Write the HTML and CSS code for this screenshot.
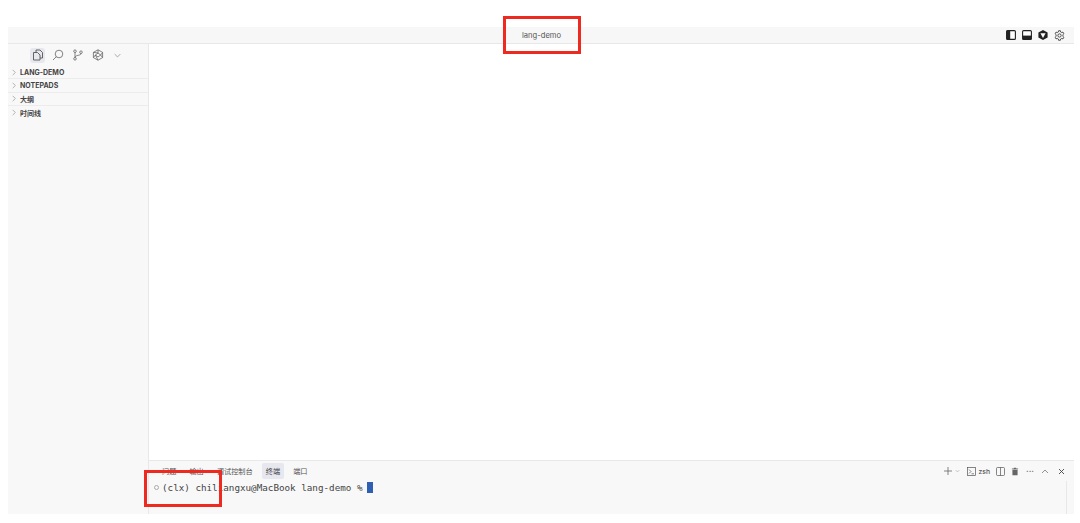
FILE: index.html
```html
<!DOCTYPE html>
<html lang="zh">
<head>
<meta charset="utf-8">
<title>lang-demo</title>
<link rel="stylesheet" href="styles.css">
</head>
<body>
<div class="window">
  <header class="titlebar">
    <span class="title">lang-demo</span>
    <div class="title-actions">
      <svg class="ti" viewBox="0 0 10 10"><rect x="0.6" y="0.6" width="8.8" height="8.8" rx="1" fill="#fff" stroke="#222" stroke-width="1.1"/><rect x="0.6" y="0.6" width="3.6" height="8.8" fill="#222"/></svg>
      <svg class="ti" viewBox="0 0 10 10"><rect x="0.6" y="0.6" width="8.8" height="8.8" rx="1" fill="#fff" stroke="#222" stroke-width="1.1"/><rect x="0.6" y="5.6" width="8.8" height="3.8" fill="#222"/></svg>
      <svg class="ti" viewBox="0 0 10 10"><path d="M5 0 9.6 2.4V7.6L5 10 0.4 7.6V2.4Z" fill="#222"/><path d="M2.4 3.2H7.6L5 7.9Z" fill="#fff"/></svg>
      <svg class="ti ti-gear" viewBox="0 0 12 12" fill="none" stroke="#333" stroke-width="0.9"><path d="M5 0.8H7L7.3 2.2 8.4 2.8 9.8 2.3 10.8 4 9.7 5 9.7 7 10.8 8 9.8 9.7 8.4 9.2 7.3 9.8 7 11.2H5L4.7 9.8 3.6 9.2 2.2 9.7 1.2 8 2.3 7V5L1.2 4 2.2 2.3 3.6 2.8 4.7 2.2Z"/><circle cx="6" cy="6" r="1.8"/></svg>
    </div>
  </header>
  <div class="main">
    <aside class="sidebar">
      <div class="activity">
        <span class="act act-on"><svg viewBox="0 0 12 12" fill="none" stroke="#555" stroke-width="0.9"><path d="M4 3.5V1H8L10.5 3.5V9H8"/><path d="M1.5 3.5H5.5L8 6V11H1.5Z"/></svg></span>
        <span class="act"><svg viewBox="0 0 12 12" fill="none" stroke="#666" stroke-width="0.8"><circle cx="7" cy="5" r="3.8"/><path d="M4.3 7.7 1 11"/></svg></span>
        <span class="act"><svg viewBox="0 0 12 12" fill="none" stroke="#666" stroke-width="0.8"><circle cx="3" cy="2.2" r="1.3"/><circle cx="3" cy="9.8" r="1.3"/><circle cx="9" cy="3.2" r="1.3"/><path d="M3 3.5V8.5M9 4.5C9 7 3.5 5.5 3 8.5"/></svg></span>
        <span class="act"><svg viewBox="0 0 12 12" fill="none" stroke="#666" stroke-width="0.8"><path d="M6 0.8 10.6 3.4V8.6L6 11.2 1.4 8.6V3.4Z"/><path d="M6 0.8V4L3.4 6 6 11.2M1.4 3.4 6 4 8.6 6 6 8M10.6 3.4 8.6 6 10.6 8.6M1.4 8.6 3.4 6 6 8"/></svg></span>
        <span class="act"><svg class="chev-sm" viewBox="0 0 10 6" fill="none" stroke="#777" stroke-width="0.9"><path d="M1 1 5 5 9 1"/></svg></span>
      </div>
      <div class="tree-row"><svg class="chev" viewBox="0 0 6 10" fill="none" stroke="#777" stroke-width="0.8"><path d="M1 1 5 5 1 9"/></svg><span>LANG-DEMO</span></div>
      <div class="tree-row"><svg class="chev" viewBox="0 0 6 10" fill="none" stroke="#777" stroke-width="0.8"><path d="M1 1 5 5 1 9"/></svg><span>NOTEPADS</span></div>
      <div class="tree-row"><svg class="chev" viewBox="0 0 6 10" fill="none" stroke="#777" stroke-width="0.8"><path d="M1 1 5 5 1 9"/></svg><span>大纲</span></div>
      <div class="tree-row tree-last"><svg class="chev" viewBox="0 0 6 10" fill="none" stroke="#777" stroke-width="0.8"><path d="M1 1 5 5 1 9"/></svg><span>时间线</span></div>
    </aside>
    <div class="content">
      <main class="editor"></main>
      <section class="panel">
        <div class="panel-bar">
          <nav class="tabs">
            <span class="tab">问题</span>
            <span class="tab">输出</span>
            <span class="tab">调试控制台</span>
            <span class="tab tab-on">终端</span>
            <span class="tab">端口</span>
          </nav>
          <div class="panel-actions">
            <svg class="pi-plus" viewBox="0 0 9 9" fill="none" stroke="#666" stroke-width="0.9"><path d="M4.5 0V9M0 4.5H9"/></svg>
            <svg class="pi-chev" viewBox="0 0 8 5" fill="none" stroke="#888" stroke-width="0.7"><path d="M1 1 4 4 7 1"/></svg>
            <svg class="pi pi-term" viewBox="0 0 9 9" fill="none" stroke="#555" stroke-width="0.7"><rect x="0.5" y="0.5" width="8" height="8"/><path d="M2 2.5 4 4.5 2 6.5M4.5 6.8H7"/></svg>
            <span class="zsh">zsh</span>
            <svg class="pi pi-split" viewBox="0 0 9 9" fill="none" stroke="#555" stroke-width="0.7"><rect x="0.5" y="0.5" width="8" height="8" rx="1"/><path d="M4.5 0.5V8.5"/></svg>
            <svg class="pi pi-trash" viewBox="0 0 9 9" fill="#666"><path d="M3.2 0.3H5.8V1.2H8V2H1V1.2H3.2ZM1.6 2.6H7.4V8.7H1.6Z"/></svg>
            <span class="dots">···</span>
            <svg class="pi-up" viewBox="0 0 8 5" fill="none" stroke="#666" stroke-width="0.7"><path d="M1 4 4 1 7 4"/></svg>
            <svg class="pi-x" viewBox="0 0 7 7" fill="none" stroke="#444" stroke-width="0.9"><path d="M1 1 6 6M6 1 1 6"/></svg>
          </div>
        </div>
        <div class="terminal">
          <div class="term-line"><span class="dot"></span><span class="prompt">(clx) chiliangxu@MacBook lang-demo %</span><span class="cursor"></span></div>
          <div class="scroll"></div>
        </div>
      </section>
    </div>
  </div>
</div>
<div class="callout callout-title"></div>
<div class="callout callout-term"></div>
</body>
</html>
```

FILE: styles.css
```css
* { box-sizing: border-box; }
html, body { margin: 0; height: 100%; background: #fff; }
body {
  padding: 27px 6px 9px 8px;
  font-family: "Inter", "Liberation Sans", "Noto Sans CJK SC", sans-serif;
  overflow: hidden;
  position: relative;
}
.window { height: 100%; display: flex; flex-direction: column; background: #fff; }
.titlebar {
  height: 17px;
  flex: none;
  background: #f7f7f7;
  border-bottom: 1px solid #e8e8e8;
  display: flex;
  align-items: center;
  justify-content: flex-end;
  position: relative;
  padding-right: 9px;
}
.title {
  position: absolute;
  left: 514px;
  font-size: 7.6px;
  color: #555;
}
.title-actions { display: flex; align-items: center; gap: 6px; }
.ti { width: 10px; height: 10px; display: block; }
.ti-gear { width: 11px; height: 11px; }
.main { flex: 1; display: flex; min-height: 0; }
.sidebar {
  width: 141px;
  flex: none;
  background: #f8f8f8;
  border-right: 1px solid #e8e8e8;
}
.activity {
  height: 22px;
  display: flex;
  align-items: center;
  padding: 0 0 0 22px;
  gap: 5px;
}
.act {
  width: 15px;
  height: 15px;
  border-radius: 3px;
  display: flex;
  align-items: center;
  justify-content: center;
}
.act svg { width: 12px; height: 12px; display: block; }
.act .chev-sm { width: 7px; height: 5px; }
.act-on { background: #e7e7ef; }
.tree-row {
  height: 13.4px;
  display: flex;
  align-items: center;
  gap: 4px;
  padding-left: 4px;
  font-size: 7px;
  font-weight: 700;
  color: #444;
  border-bottom: 1px solid #ececec;
}
.tree-last { border-bottom: 0; }
.chev { width: 4px; height: 7px; display: block; }
.content { flex: 1; min-width: 0; display: flex; flex-direction: column; }
.editor { flex: 1; background: #fff; }
.panel {
  height: 54px;
  flex: none;
  background: #f8f8f8;
  border-top: 1px solid #e8e8e8;
}
.panel-bar {
  height: 20px;
  display: flex;
  align-items: center;
  justify-content: space-between;
  padding: 0 9px 0 9px;
}
.tabs { display: flex; align-items: center; gap: 5px; }
.tab { font-size: 7.2px; color: #555; padding: 3px 4px; border-radius: 2px; }
.tab-on { background: #e7e7ef; color: #444; }
.panel-actions { display: flex; align-items: center; }
.pi-plus { width: 8px; height: 8px; margin-right: 3px; }
.pi-chev { width: 5px; height: 4px; margin-right: 7px; }
.pi { width: 9px; height: 9px; display: block; }
.zsh { font-size: 6.8px; font-weight: 500; color: #555; margin: 0 6px 0 2px; }
.pi-trash { width: 8px; margin: 0 7px 0 6px; }
.dots { font-size: 8px; font-weight: 700; color: #666; width: 7px; margin-right: 8px; line-height: 9px; }
.pi-up { width: 8px; height: 5px; margin-right: 9px; }
.pi-x { width: 7px; height: 7px; }
.terminal { display: flex; justify-content: space-between; height: 33px; }
.term-line {
  display: flex;
  align-items: center;
  height: 12px;
  padding-left: 5px;
}
.dot { width: 5px; height: 5px; border: 1px solid #aaa; border-radius: 50%; margin-right: 3px; }
.prompt { font-family: "DejaVu Sans Mono", "Liberation Mono", monospace; font-size: 9.25px; color: #444; white-space: pre; }
.cursor { width: 6px; height: 11px; background: #2f5fb3; margin-left: 5px; }
.scroll { width: 8px; border-left: 1px solid #e8e8e8; }
.callout { position: absolute; border: 3px solid #ee2a20; }
.callout-title { left: 503px; top: 16px; width: 78px; height: 38px; }
.callout-term { left: 144px; top: 470px; width: 78px; height: 37px; }
```
